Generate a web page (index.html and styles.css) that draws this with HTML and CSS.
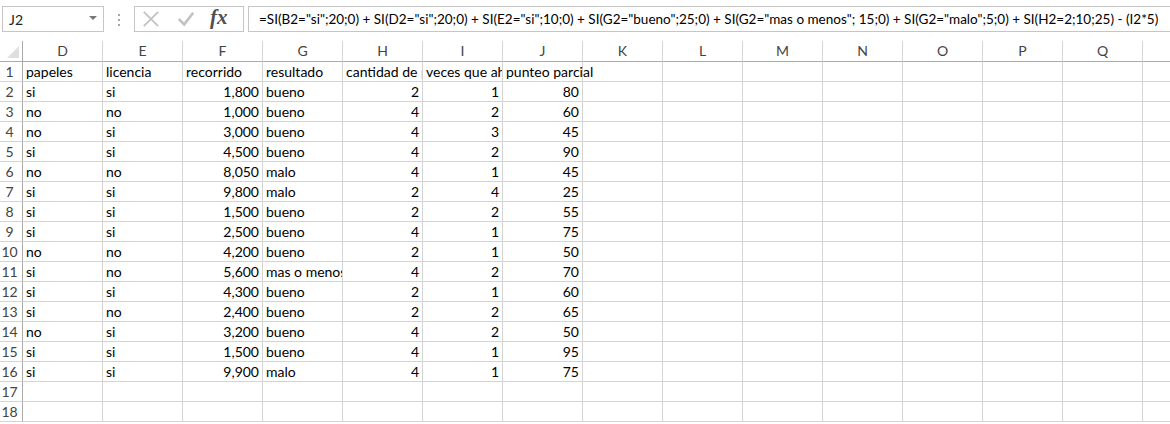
FILE: index.html
```html
<!DOCTYPE html>
<html lang="es">
<head>
<meta charset="utf-8">
<title>Hoja de cálculo</title>
<link rel="stylesheet" href="styles.css">
</head>
<body>
<div class="app">
  <div class="toolbar">
    <div class="namebox"><span class="name">J2</span><span class="arrow"></span></div>
    <div class="grip"><i></i><i></i><i></i></div>
    <div class="fbtns">
      <svg class="ico" width="20" height="20" viewBox="0 0 20 20"><path d="M2 2 L18 18 M18 2 L2 18" stroke="#c3c3c3" stroke-width="2" fill="none"/></svg>
      <svg class="ico" width="20" height="20" viewBox="0 0 20 20"><path d="M2 10 L8 16 L18 3" stroke="#c3c3c3" stroke-width="3" fill="none"/></svg>
      <span class="fx">fx</span>
    </div>
    <div class="formula">=SI(B2="si";20;0) + SI(D2="si";20;0) + SI(E2="si";10;0) + SI(G2="bueno";25;0) + SI(G2="mas o menos"; 15;0) + SI(G2="malo";5;0) + SI(H2=2;10;25) - (I2*5)</div>
  </div>
  <div class="sheet" id="sheet">
    <div class="corner"><span class="tri"></span></div>
    <div class="ch">D</div><div class="ch">E</div><div class="ch">F</div><div class="ch">G</div><div class="ch">H</div><div class="ch">I</div><div class="ch">J</div><div class="ch">K</div><div class="ch">L</div><div class="ch">M</div><div class="ch">N</div><div class="ch">O</div><div class="ch">P</div><div class="ch">Q</div><div class="ch"></div>

    <div class="rh">1</div><div class="c">papeles</div><div class="c">licencia</div><div class="c">recorrido</div><div class="c">resultado</div><div class="c">cantidad de personas</div><div class="c">veces que ahorró</div><div class="c ov">punteo parcial</div><div class="c"></div><div class="c"></div><div class="c"></div><div class="c"></div><div class="c"></div><div class="c"></div><div class="c"></div><div class="c"></div>

    <div class="rh">2</div><div class="c">si</div><div class="c">si</div><div class="c n">1,800</div><div class="c">bueno</div><div class="c n">2</div><div class="c n">1</div><div class="c n">80</div><div class="c"></div><div class="c"></div><div class="c"></div><div class="c"></div><div class="c"></div><div class="c"></div><div class="c"></div><div class="c"></div>

    <div class="rh">3</div><div class="c">no</div><div class="c">no</div><div class="c n">1,000</div><div class="c">bueno</div><div class="c n">4</div><div class="c n">2</div><div class="c n">60</div><div class="c"></div><div class="c"></div><div class="c"></div><div class="c"></div><div class="c"></div><div class="c"></div><div class="c"></div><div class="c"></div>

    <div class="rh">4</div><div class="c">no</div><div class="c">si</div><div class="c n">3,000</div><div class="c">bueno</div><div class="c n">4</div><div class="c n">3</div><div class="c n">45</div><div class="c"></div><div class="c"></div><div class="c"></div><div class="c"></div><div class="c"></div><div class="c"></div><div class="c"></div><div class="c"></div>

    <div class="rh">5</div><div class="c">si</div><div class="c">si</div><div class="c n">4,500</div><div class="c">bueno</div><div class="c n">4</div><div class="c n">2</div><div class="c n">90</div><div class="c"></div><div class="c"></div><div class="c"></div><div class="c"></div><div class="c"></div><div class="c"></div><div class="c"></div><div class="c"></div>

    <div class="rh">6</div><div class="c">no</div><div class="c">no</div><div class="c n">8,050</div><div class="c">malo</div><div class="c n">4</div><div class="c n">1</div><div class="c n">45</div><div class="c"></div><div class="c"></div><div class="c"></div><div class="c"></div><div class="c"></div><div class="c"></div><div class="c"></div><div class="c"></div>

    <div class="rh">7</div><div class="c">si</div><div class="c">si</div><div class="c n">9,800</div><div class="c">malo</div><div class="c n">2</div><div class="c n">4</div><div class="c n">25</div><div class="c"></div><div class="c"></div><div class="c"></div><div class="c"></div><div class="c"></div><div class="c"></div><div class="c"></div><div class="c"></div>

    <div class="rh">8</div><div class="c">si</div><div class="c">si</div><div class="c n">1,500</div><div class="c">bueno</div><div class="c n">2</div><div class="c n">2</div><div class="c n">55</div><div class="c"></div><div class="c"></div><div class="c"></div><div class="c"></div><div class="c"></div><div class="c"></div><div class="c"></div><div class="c"></div>

    <div class="rh">9</div><div class="c">si</div><div class="c">si</div><div class="c n">2,500</div><div class="c">bueno</div><div class="c n">4</div><div class="c n">1</div><div class="c n">75</div><div class="c"></div><div class="c"></div><div class="c"></div><div class="c"></div><div class="c"></div><div class="c"></div><div class="c"></div><div class="c"></div>

    <div class="rh">10</div><div class="c">no</div><div class="c">no</div><div class="c n">4,200</div><div class="c">bueno</div><div class="c n">2</div><div class="c n">1</div><div class="c n">50</div><div class="c"></div><div class="c"></div><div class="c"></div><div class="c"></div><div class="c"></div><div class="c"></div><div class="c"></div><div class="c"></div>

    <div class="rh">11</div><div class="c">si</div><div class="c">no</div><div class="c n">5,600</div><div class="c">mas o menos</div><div class="c n">4</div><div class="c n">2</div><div class="c n">70</div><div class="c"></div><div class="c"></div><div class="c"></div><div class="c"></div><div class="c"></div><div class="c"></div><div class="c"></div><div class="c"></div>

    <div class="rh">12</div><div class="c">si</div><div class="c">si</div><div class="c n">4,300</div><div class="c">bueno</div><div class="c n">2</div><div class="c n">1</div><div class="c n">60</div><div class="c"></div><div class="c"></div><div class="c"></div><div class="c"></div><div class="c"></div><div class="c"></div><div class="c"></div><div class="c"></div>

    <div class="rh">13</div><div class="c">si</div><div class="c">no</div><div class="c n">2,400</div><div class="c">bueno</div><div class="c n">2</div><div class="c n">2</div><div class="c n">65</div><div class="c"></div><div class="c"></div><div class="c"></div><div class="c"></div><div class="c"></div><div class="c"></div><div class="c"></div><div class="c"></div>

    <div class="rh">14</div><div class="c">no</div><div class="c">si</div><div class="c n">3,200</div><div class="c">bueno</div><div class="c n">4</div><div class="c n">2</div><div class="c n">50</div><div class="c"></div><div class="c"></div><div class="c"></div><div class="c"></div><div class="c"></div><div class="c"></div><div class="c"></div><div class="c"></div>

    <div class="rh">15</div><div class="c">si</div><div class="c">si</div><div class="c n">1,500</div><div class="c">bueno</div><div class="c n">4</div><div class="c n">1</div><div class="c n">95</div><div class="c"></div><div class="c"></div><div class="c"></div><div class="c"></div><div class="c"></div><div class="c"></div><div class="c"></div><div class="c"></div>

    <div class="rh">16</div><div class="c">si</div><div class="c">si</div><div class="c n">9,900</div><div class="c">malo</div><div class="c n">4</div><div class="c n">1</div><div class="c n">75</div><div class="c"></div><div class="c"></div><div class="c"></div><div class="c"></div><div class="c"></div><div class="c"></div><div class="c"></div><div class="c"></div>

    <div class="rh">17</div><div class="c"></div><div class="c"></div><div class="c"></div><div class="c"></div><div class="c"></div><div class="c"></div><div class="c"></div><div class="c"></div><div class="c"></div><div class="c"></div><div class="c"></div><div class="c"></div><div class="c"></div><div class="c"></div><div class="c"></div>

    <div class="rh">18</div><div class="c"></div><div class="c"></div><div class="c"></div><div class="c"></div><div class="c"></div><div class="c"></div><div class="c"></div><div class="c"></div><div class="c"></div><div class="c"></div><div class="c"></div><div class="c"></div><div class="c"></div><div class="c"></div><div class="c"></div>
  </div>
</div>
</body>
</html>
```

FILE: styles.css
```css
* { box-sizing: border-box; }
html, body {
  margin: 0;
  padding: 0;
  background: #ffffff;
  overflow: hidden;
}
body {
  font-family: Lato, "Open Sans", sans-serif;
  font-size: 14px;
  color: #000;
}
.app {
  width: 1170px;
  height: 424px;
  overflow: hidden;
}
.toolbar {
  height: 41px;
  display: flex;
  align-items: flex-start;
  padding-top: 6px;
  padding-left: 2px;
}
.namebox {
  width: 102px;
  height: 26px;
  border: 1px solid #c6c6c6;
  display: flex;
  align-items: center;
  justify-content: space-between;
  padding: 0 6px 0 6px;
}
.name {
  font-size: 14px;
  color: #222;
}
.arrow {
  width: 0;
  height: 0;
  border-left: 4px solid transparent;
  border-right: 4px solid transparent;
  border-top: 4px solid #777;
  margin-top: -2px;
}
.grip {
  width: 30px;
  display: flex;
  flex-direction: column;
  align-items: center;
  gap: 3px;
  padding-top: 8px;
}
.grip i {
  display: block;
  width: 2px;
  height: 2px;
  background: #a6a6a6;
}
.fbtns {
  width: 110px;
  height: 26px;
  border: 1px solid #c6c6c6;
  display: flex;
  align-items: center;
  padding-left: 7px;
  gap: 17px;
}
.ico {
  width: 18px;
  height: 18px;
  flex: none;
}
.fx {
  font-family: "Liberation Serif", serif;
  font-style: italic;
  font-weight: bold;
  font-size: 21px;
  color: #505050;
  line-height: 1;
  margin-left: -2px;
  margin-top: -3px;
}
.formula {
  margin-left: 4px;
  flex: 1;
  height: 26px;
  border: 1px solid #c6c6c6;
  border-right: none;
  padding-left: 10px;
  white-space: nowrap;
  overflow: hidden;
  line-height: 24px;
  font-size: 13.5px;
  color: #000;
}
.sheet {
  display: grid;
  grid-template-columns: 23px repeat(15, 80px);
  grid-template-rows: 21px repeat(18, 20px);
  width: 1223px;
}
.corner {
  border-right: 1px solid #ababab;
  border-bottom: 1px solid #ababab;
  position: relative;
}
.tri {
  position: absolute;
  right: 3px;
  bottom: 3px;
  width: 0;
  height: 0;
  border-left: 12px solid transparent;
  border-bottom: 12px solid #dfdfdf;
}
.ch {
  border-right: 1px solid #d4d4d4;
  border-bottom: 1px solid #ababab;
  text-align: center;
  color: #444;
  font-size: 14px;
  line-height: 20px;
}
.rh {
  border-right: 1px solid #ababab;
  border-bottom: 1px solid #d4d4d4;
  color: #444;
  font-size: 14px;
  line-height: 19px;
  text-align: center;
  padding-right: 3px;
}
.c {
  border-right: 1px solid #d4d4d4;
  border-bottom: 1px solid #d4d4d4;
  padding: 0 3px;
  white-space: nowrap;
  overflow: hidden;
  line-height: 19px;
  display: flex;
  align-items: flex-end;
}
.c.n {
  justify-content: flex-end;
}
.c.ov {
  overflow: visible;
}
```
